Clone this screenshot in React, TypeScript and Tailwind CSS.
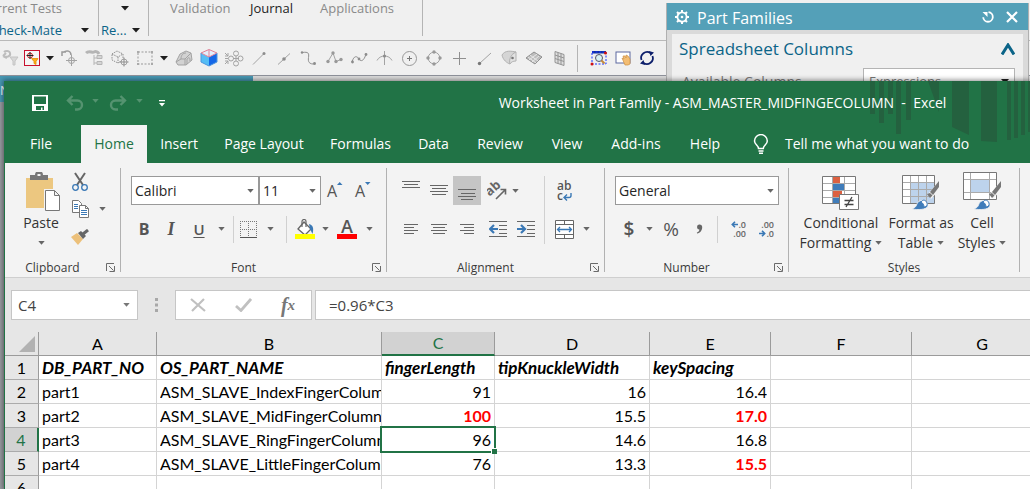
import React from "react";

const UI = "font-['Open_Sans','Noto_Sans',sans-serif]";
const GREY = "#a3a3a3";

function Svg({ w, h, children, className = "" }: { w: number; h: number; children: React.ReactNode; className?: string }) {
  return (
    <svg width={w} height={h} viewBox={`0 0 ${w} ${h}`} fill="none" aria-hidden="true" className={`block shrink-0 ${className}`}>
      {children}
    </svg>
  );
}

function Caret({ color = "#666" }: { color?: string }) {
  return (
    <Svg w={7} h={4}>
      <path d="M0.3 0h6.4L3.5 3.8z" fill={color} />
    </Svg>
  );
}

function BigCaret() {
  return (
    <Svg w={8} h={5}>
      <path d="M0 0h8L4 4.6z" fill="#1e1e1e" />
    </Svg>
  );
}

function Btn({ label, className = "", children }: { label: string; className?: string; children: React.ReactNode }) {
  return (
    <button type="button" aria-label={label} title={label} className={`flex shrink-0 items-center justify-center ${className}`}>
      {children}
    </button>
  );
}

/* ---------- modelling toolbar ---------- */

const snapIcons: { label: string; art: React.ReactNode }[] = [
  {
    label: "Shaded body",
    art: (
      <>
        <path d="M2 14l4-8 6-3 5 2 1 7-6 5-8 0z" fill="#d2d2d2" stroke={GREY} />
        <path d="M2 14l5-3 4 0 0 6M11 11l6-6M7 11c0-4 2-6 5-6M13 16v-5c2-2 3-2 3 2" stroke={GREY} />
      </>
    ),
  },
  {
    label: "Solid body",
    art: (
      <>
        <path d="M2 5l8 4v9l-8-4z" fill="#55bdf5" />
        <path d="M10 9l8-4v9l-8 4z" fill="#1467e8" />
        <path d="M2 5l8-3.500L18 5l-8 4z" fill="#e3eefb" />
        <path d="M2 5l8-3.500L18 5l-8 4zM10 2v7" stroke="#e08095" />
        <path d="M2 5v9l8 4 8-4V5" stroke="#4c96dd" />
      </>
    ),
  },
  {
    label: "Snap points",
    art: (
      <>
        <circle cx="12" cy="5.500" r="2.500" stroke={GREY} />
        <circle cx="12" cy="15.500" r="2.500" stroke={GREY} />
        <circle cx="7" cy="10.500" r="2.500" stroke={GREY} />
        <circle cx="16.500" cy="10.500" r="2.500" stroke={GREY} />
        <path d="M9 10.500h6M12 8v5M1 5l3 3M4 5v3H1M1 16l3-3M1 13h3v3M1 10.500h3" stroke={GREY} />
      </>
    ),
  },
  {
    label: "End point",
    art: (
      <>
        <path d="M4 16.500L14.500 6" stroke={GREY} />
        <circle cx="15" cy="5.500" r="1.500" fill="#8c8c8c" />
      </>
    ),
  },
  {
    label: "Mid point",
    art: (
      <>
        <path d="M4 16.500L16 5.500" stroke={GREY} />
        <circle cx="10" cy="11" r="1.800" fill="#8c8c8c" />
      </>
    ),
  },
  {
    label: "Control point",
    art: (
      <>
        <path d="M3 4.500c7-1 7 1 6.500 5s0 7 7 6.500" stroke="#8f8f8f" />
        <circle cx="3" cy="4.500" r="1.200" fill="#8c8c8c" />
        <circle cx="15.500" cy="15.500" r="1.400" fill="#8c8c8c" />
      </>
    ),
  },
  {
    label: "Spline pole",
    art: (
      <>
        <path d="M4 13.500L9 5l3 8.500 5-2" stroke={GREY} />
        <g fill="#999">
          <circle cx="4" cy="13.500" r="1.700" />
          <circle cx="9" cy="5" r="1.700" />
          <circle cx="12" cy="13.500" r="1.700" />
          <circle cx="17" cy="11.500" r="1.700" />
        </g>
      </>
    ),
  },
  {
    label: "Spline",
    art: (
      <>
        <path d="M3 14c2-7 5-6 7-3s5 2 7-5" stroke="#8f8f8f" />
        <circle cx="3.500" cy="14" r="1.400" fill="#8c8c8c" />
        <circle cx="10" cy="11" r="1.400" fill="#8c8c8c" />
        <circle cx="17" cy="6.500" r="1.400" fill="#8c8c8c" />
      </>
    ),
  },
  {
    label: "Intersection",
    art: (
      <>
        <path d="M10.500 3v14M3 12.500c3-6 12-6 15 0" stroke={GREY} />
        <circle cx="10.500" cy="8" r="1.600" fill="#8c8c8c" />
      </>
    ),
  },
  {
    label: "Arc centre",
    art: (
      <>
        <circle cx="10.500" cy="10.500" r="7" stroke="#999" />
        <path d="M10.500 8v5M8 10.500h5" stroke="#777" />
      </>
    ),
  },
  {
    label: "Quadrant",
    art: (
      <>
        <circle cx="10" cy="10" r="5.800" stroke={GREY} />
        <g fill="#999">
          <circle cx="10" cy="4" r="1.700" />
          <circle cx="10" cy="16" r="1.700" />
          <circle cx="4" cy="10" r="1.700" />
          <circle cx="16" cy="10" r="1.700" />
        </g>
      </>
    ),
  },
  { label: "Existing point", art: <path d="M10.500 4v13M4 10.500h13" stroke="#8f8f8f" /> },
  {
    label: "Point on curve",
    art: (
      <>
        <path d="M5.500 15.500L17 5" stroke={GREY} />
        <circle cx="5.500" cy="15.500" r="1.700" fill="#777" />
      </>
    ),
  },
  {
    label: "Point on face",
    art: (
      <>
        <path d="M3 7c3-5 9-4 14-3-4 1-4 4-3 6-3-1-4 4-3 6-3-1-7-4-8-9z" fill="#d5d5d5" stroke="#b2b2b2" />
        <path d="M11 16c-1-4 0-9 6-12v9c-3 0-5 1-6 3z" fill="#e2e2e2" stroke="#b2b2b2" />
        <circle cx="13.500" cy="10" r="1.300" fill="#777" />
      </>
    ),
  },
  {
    label: "Grid point",
    art: (
      <>
        <path d="M2 10l8-6 8 5-7 7z" fill="#bdbdbd" stroke="#8f8f8f" />
        <path d="M5 12l8-6M8 14l7-6M6 7l8 6M4 9l8 6" stroke="#e8e8e8" />
      </>
    ),
  },
  {
    label: "Bounded grid",
    art: (
      <>
        <path d="M6 3.500l9 3v11l-9-3z" fill="#dedede" stroke="#949494" />
        <path d="M9 4.500v11M12 5.500v11M6 7l9 3M6 10.500l9 3" stroke="#949494" />
      </>
    ),
  },
];

function ModellingToolbar() {
  return (
    <div className="flex h-[35px] shrink-0 items-center overflow-hidden border-b border-[#8f929b]">
      <Btn label="Reset filter" className="w-5">
        <Svg w={18} h={20}>
          <path d="M2 8c4 2 8 0 7-3s-5-2-6-1M2 8l3-3M2 8l4 2" stroke="#bdbdbd" strokeWidth="2" />
          <path d="M9 9h8l-3 4v4h-2v-4z" fill="#d8d8d8" stroke="#c4c4c4" />
        </Svg>
      </Btn>
      <Btn label="Detail filter" className="w-6">
        <Svg w={16} h={16}>
          <rect x="0.500" y="0.500" width="15" height="15" fill="#f6f6f6" stroke="#c8102e" />
          <circle cx="6" cy="5.500" r="2.500" stroke="#c22" />
          <path d="M6 2v7M2.500 5.500h7" stroke="#222" />
          <path d="M7.500 8.500h6.500l-2 3v3l-2-1v-2z" fill="#ffae1a" stroke="#e28b00" strokeWidth="0.800" />
        </Svg>
      </Btn>
      <Btn label="Filter options" className="w-3"><BigCaret /></Btn>
      <Btn label="Point orientation" className="w-[26px]">
        <Svg w={20} h={20}>
          <path d="M4 4.500C8 1.500 12 3 12 7M3 8V4h4" stroke="#999" strokeWidth="1.500" />
          <circle cx="12.500" cy="12.500" r="3" stroke={GREY} />
          <path d="M12.500 7v11M7 12.500h11" stroke={GREY} />
        </Svg>
      </Btn>
      <Btn label="Assembly tree" className="w-[25px]">
        <Svg w={20} h={20}>
          <path d="M1 5c3-3 6 0 8-1s4 0 5 2" stroke="#b5b5b5" strokeWidth="3" />
          <path d="M9 7v10M9 10h4M9 15h4" stroke="#b5b5b5" />
          <path d="M12 7.500h5v3h-5zM12 13.500h5v3h-5z" fill="#d5d5d5" stroke="#b5b5b5" />
        </Svg>
      </Btn>
      <Btn label="Component point" className="w-[25px]">
        <Svg w={20} h={20}>
          <path d="M2 6l5-3 6 3v6l-5 3-6-3zM2 6l6 3 5-3M8 9v6" stroke="#8f8f8f" strokeDasharray="1.500 1" />
          <circle cx="14" cy="14" r="3" fill="#eee" stroke={GREY} />
          <path d="M14 9.500v9M9.500 14h9" stroke="#8f8f8f" />
        </Svg>
      </Btn>
      <Btn label="Rectangle select" className="w-[25px]">
        <Svg w={16} h={14}>
          <rect x="1" y="1" width="14" height="12" stroke="#999" strokeDasharray="2 1.500" />
          <path d="M0 0h2v2H0zM14 0h2v2h-2zM0 12h2v2H0zM14 12h2v2h-2z" fill="#aaa" />
        </Svg>
      </Btn>
      <Btn label="Selection options" className="w-[14px]"><BigCaret /></Btn>
      {snapIcons.map((i) => (
        <Btn key={i.label} label={i.label} className="w-[25px]">
          <Svg w={20} h={20}>{i.art}</Svg>
        </Btn>
      ))}
      <div className="ml-1.5 mr-2 h-[27px] w-px shrink-0 bg-[#b4b4b4]" />
      <Btn label="Zoom to region" className="w-[25px]">
        <Svg w={18} h={18}>
          <rect x="2" y="2" width="14" height="2.500" fill="#1030a0" />
          <rect x="2" y="3" width="14" height="12" stroke="#1733ff" strokeDasharray="2 1.500" />
          <circle cx="9" cy="9" r="3.500" fill="#d8f1f4" stroke="#556" />
          <path d="M11.500 11.500l3 3" stroke="#c48a3a" strokeWidth="2" />
          <circle cx="15.500" cy="4" r="1.500" fill="#d01010" />
          <circle cx="2" cy="15" r="1.500" fill="#d01010" />
        </Svg>
      </Btn>
      <Btn label="Pan" className="w-6">
        <Svg w={18} h={18}>
          <rect x="2" y="3" width="14" height="11" fill="#fff" stroke="#5c68a0" />
          <path d="M8 9l2 1-1-3 2 0 1 2 0-3 2 1 2 3v5l-2 1h-3z" fill="#f3bd73" stroke="#cf8f3f" strokeWidth="0.700" />
        </Svg>
      </Btn>
      <Btn label="Refresh" className="w-6">
        <Svg w={18} h={18}>
          <path d="M3.500 11A6 6 0 0 1 12.500 4M14.500 7A6 6 0 0 1 5.500 14" stroke="#0d1f6b" strokeWidth="1.800" />
          <path d="M11 2l5 1.500-3.500 3.500zM7 16l-5-1.500L5.500 11z" fill="#0d1f6b" />
        </Svg>
      </Btn>
    </div>
  );
}

function HostRibbon() {
  return (
    <div className="flex h-10 shrink-0 overflow-hidden border-b border-transparent text-[13px] leading-[22px] text-[#8a8a8a]">
      <div className="-mt-[3px] w-[98px] shrink-0">
        <div className="flex w-[62px] justify-end overflow-hidden whitespace-nowrap">Current Tests</div>
        <div className="flex items-center text-[#0b6488]">
          <span className="flex w-[62px] justify-end overflow-hidden whitespace-nowrap">Check-Mate</span>
          <Btn label="Check-Mate menu" className="ml-[19px]"><BigCaret /></Btn>
        </div>
      </div>
      <div className="h-9 w-px shrink-0 bg-[#b4b4b4]" />
      <div className="-mt-[3px] w-[49px] shrink-0 pl-0.5">
        <div className="flex h-[22px] items-center pl-5"><Btn label="More tests"><BigCaret /></Btn></div>
        <div className="flex items-center justify-between pr-2 text-[#0b6488]">
          <span>Re...</span>
          <Btn label="Results menu"><BigCaret /></Btn>
        </div>
      </div>
      <div className="h-9 w-px shrink-0 bg-[#b4b4b4]" />
      <div className="-mt-[3px] flex w-[273px] shrink-0 items-start pl-[21px]">
        <span className="w-20">Validation</span>
        <span className="w-[70px] text-[#1e1e1e]">Journal</span>
        <span>Applications</span>
      </div>
      <div className="h-9 w-px shrink-0 bg-[#b4b4b4]" />
    </div>
  );
}

function PartFamilies() {
  return (
    <section className="absolute right-px top-[3px] w-[363px] border-x border-[#b0b0b0] bg-[#dadada]">
      <header className="flex h-[27px] items-center bg-[#54a0b8] pl-2 pr-2.5 text-white">
        <Svg w={14} h={14}>
          <circle cx="7" cy="7" r="4.600" stroke="#fff" strokeWidth="1.800" />
          <circle cx="7" cy="7" r="1.300" fill="#fff" />
          <path d="M7 0v2.500M7 11.500V14M0 7h2.500M11.500 7H14M2 2l1.800 1.800M10.200 10.200L12 12M12 2l-1.800 1.800M3.800 10.200L2 12" stroke="#fff" strokeWidth="2" />
        </Svg>
        <h2 className="flex-1 pl-2 pt-0.5 text-[16px] leading-6">Part Families</h2>
        <Btn label="Reset" className="mr-3">
          <Svg w={12} h={12}>
            <path d="M6.500 1.200a4.800 4.800 0 1 1-5.300 5" stroke="#fff" strokeWidth="1.800" />
            <path d="M0.500 1h5v5z" fill="#fff" />
          </Svg>
        </Btn>
        <Btn label="Close">
          <Svg w={12} h={12}><path d="M1 1l10 10M11 1L1 11" stroke="#fff" strokeWidth="2.200" /></Svg>
        </Btn>
      </header>
      <div className="mx-[5px] mt-1 bg-[#f0f0f0] pb-6 pl-[7px] pr-2">
        <div className="flex h-[30px] items-center justify-between text-[#0b6488]">
          <h3 className="text-[17px] leading-6">Spreadsheet Columns</h3>
          <Btn label="Collapse">
            <Svg w={14} h={12}><path d="M1 11.500L7 2l6 9.500" stroke="#0b6488" strokeWidth="3" /></Svg>
          </Btn>
        </div>
        <div className="flex items-start pl-[3px] pt-1 text-[14px] text-[#777]">
          <label htmlFor="cols" className="flex-1 pt-1 leading-5">Available Columns</label>
          <div className="relative w-[152px]">
            <select id="cols" className="block h-7 w-full appearance-none border border-[#b4b4b4] bg-white pl-[5px] text-[13px] text-[#777]">
              <option>Expressions</option>
            </select>
            <span className="pointer-events-none absolute right-1.5 top-[11px]"><BigCaret /></span>
          </div>
        </div>
      </div>
    </section>
  );
}

/* ---------- Excel window ---------- */

function TitleBar() {
  return (
    <header className="relative flex h-11 shrink-0 items-center pl-[26px] text-white">
      <svg className="absolute right-0 top-0" width="166" height="62" viewBox="0 0 166 62" fill="#24613f" aria-hidden="true">
        <path d="M6 0h5v33H6zM15 0h5v42h-5zM24 0h5v33h-5zM32 0h5v53h-5zM42 0h5v39h-5zM64 0h11v31zM88 0h17v54L88 46zM117 0h16v61l-16-1zM143 0h4v59h-4zM150 0h4v57h-4zM157 0h4v54h-4zM164 0h2v51h-2z" />
      </svg>
      <Btn label="Save" className="w-[18px]">
        <Svg w={16} h={16}>
          <path d="M0 0h16v16H0z" fill="#fff" />
          <path d="M2 1.500h12v7.500H2zM4 11h8v4h-1.500v-2.500H9V15H4z" fill="#217346" />
        </Svg>
      </Btn>
      <Btn label="Undo" className="ml-4 w-5">
        <Svg w={18} h={16}>
          <path d="M6.500 1L2 5.500 6.500 10M2 5.500h9.500a4.500 4.500 0 0 1 0 9H9" stroke="#559370" strokeWidth="2.400" />
        </Svg>
      </Btn>
      <Btn label="Undo list" className="w-5 pb-1"><Caret color="#559370" /></Btn>
      <Btn label="Redo" className="w-[26px]">
        <Svg w={18} h={16}>
          <path d="M11.500 1L16 5.500 11.500 10M16 5.500H6.500a4.500 4.500 0 0 0 0 9H9" stroke="#559370" strokeWidth="2.400" />
        </Svg>
      </Btn>
      <Btn label="Redo list" className="w-4 pb-1"><Caret color="#559370" /></Btn>
      <Btn label="Customize Quick Access Toolbar" className="w-[30px]">
        <Svg w={6} h={7}><path d="M0 0h6v1.200H0zM0 3h6L3 6.400z" fill="#fff" /></Svg>
      </Btn>
      <h1 className="relative flex-1 whitespace-pre pl-[290px] pr-[52px] text-center text-[14px] leading-5">
        {"Worksheet in Part Family - ASM_MASTER_MIDFINGECOLUMN  -  Excel"}
      </h1>
    </header>
  );
}

const tabs = [
  { name: "File", w: "w-[76px]" },
  { name: "Home", w: "w-[66px]" },
  { name: "Insert", w: "w-16" },
  { name: "Page Layout", w: "w-[106px]" },
  { name: "Formulas", w: "w-[87px]" },
  { name: "Data", w: "w-[59px]" },
  { name: "Review", w: "w-[74px]" },
  { name: "View", w: "w-[60px]" },
  { name: "Add-ins", w: "w-[78px]" },
  { name: "Help", w: "w-[60px]" },
];

function Tabs() {
  return (
    <nav className="relative flex h-[38px] shrink-0 text-[14px] leading-5 text-white">
      {tabs.map((t) => (
        <button
          key={t.name}
          type="button"
          className={`${t.w} shrink-0 whitespace-nowrap ${t.name === "Home" ? "bg-[#f3f3f3] text-[#217346]" : ""} ${t.name === "File" ? "pr-1" : ""}`}
        >
          {t.name}
        </button>
      ))}
      <button type="button" className="ml-[18px] flex shrink-0 items-center gap-4 whitespace-nowrap">
        <Svg w={16} h={20}>
          <path d="M5.500 14.500c0-3-4-4-4-7.500a6.300 6.300 0 0 1 12.800 0c0 3.500-4 4.500-4 7.500zM5.500 17h5M6 19.200h4" stroke="#fff" strokeWidth="1.500" />
        </Svg>
        Tell me what you want to do
      </button>
    </nav>
  );
}

function Launcher({ label }: { label: string }) {
  return (
    <button type="button" aria-label={label} title={label} className="absolute bottom-0 right-[5px]">
      <Svg w={9} h={9}>
        <path d="M0.500 8V0.500H8M3 3l4.500 4.500M8.500 3v5.500H3.500" stroke="#6a6a6a" />
      </Svg>
    </button>
  );
}

function Group({ name, width, launcher = true, children }: { name: string; width: string; launcher?: boolean; children: React.ReactNode }) {
  return (
    <section aria-label={name} className={`relative my-[5px] flex shrink-0 flex-col border-r border-[#b1b1b1] ${width}`}>
      <div className="min-h-0 flex-1">{children}</div>
      <div className={`h-[11px] text-center text-[12px] leading-[14px] text-[#3a3a3a] ${launcher ? "pr-5" : ""}`}>{name}</div>
      {launcher && <Launcher label={`${name} settings`} />}
    </section>
  );
}

function Lines({ rows, w = 20, h = 20 }: { rows: [number, number, number][]; w?: number; h?: number }) {
  return (
    <Svg w={w} h={h}>
      {rows.map(([x, y, len]) => (
        <path key={y} d={`M${x} ${y + 0.5}h${len}`} stroke="#666" />
      ))}
    </Svg>
  );
}

function DropField({ id, label, value, className }: { id: string; label: string; value: string; className: string }) {
  return (
    <div className={`relative shrink-0 ${className}`}>
      <select id={id} aria-label={label} className="block h-[29px] w-full appearance-none border border-[#999] bg-white pl-[3px] text-[14px] text-[#262626]">
        <option>{value}</option>
      </select>
      <span className="pointer-events-none absolute right-[5px] top-[13px]"><Caret /></span>
    </div>
  );
}

const Sep = () => <div className="mx-1 h-[27px] w-px shrink-0 bg-[#d0d0d0]" />;

function Clipboard() {
  return (
    <div className="flex pl-[14px]">
      <button type="button" className="flex w-11 flex-col items-center pt-1 text-[14px] leading-5 text-[#333]">
        <Svg w={36} h={40} className="ml-1">
          <path d="M1 6h27v30H1z" fill="#ecc780" />
          <path d="M5 8V3h5a3.500 3.500 0 0 1 8 0h5v5z" fill="#777" />
          <path d="M12.500 4h3V2h-3z" fill="#f3f3f3" />
          <path d="M19 17h11l6 6v17H19z" fill="#f3f3f3" />
          <path d="M20.500 18.500h9l5 5v15h-14zM29.500 18.500v5h5" fill="#fff" stroke="#777" />
        </Svg>
        <span className="mt-px">Paste</span>
        <span className="mt-2"><Caret /></span>
      </button>
      <div className="flex flex-col pl-[5px]">
        <Btn label="Cut" className="h-[27px] w-6">
          <Svg w={18} h={20}>
            <path d="M4 1l8 12M14 1L6 13" stroke="#666" strokeWidth="2" />
            <circle cx="4.500" cy="15.500" r="2.800" stroke="#3a78b5" strokeWidth="1.300" />
            <circle cx="13.500" cy="15.500" r="2.800" stroke="#3a78b5" strokeWidth="1.300" />
          </Svg>
        </Btn>
        <div className="flex">
          <Btn label="Copy" className="h-7 w-6">
            <Svg w={18} h={18}>
              <path d="M1.500 0.500h6l3 3v9h-9z" fill="#fff" stroke="#777" />
              <path d="M3 4.500h4M3 6.500h4M3 8.500h4" stroke="#3a78b5" />
              <path d="M8.500 5.500h6l3 3v9h-9z" fill="#fff" stroke="#777" />
              <path d="M14.500 5.500v3h3" stroke="#777" />
              <path d="M10 10.500h6M10 12.500h6M10 14.500h6" stroke="#3a78b5" />
            </Svg>
          </Btn>
          <Btn label="Copy options" className="w-5"><Caret /></Btn>
        </div>
        <Btn label="Format Painter" className="h-7 w-6">
          <Svg w={18} h={16}>
            <path d="M0 8l6-4 6 6-5 6z" fill="#ecc07a" />
            <path d="M7 4l3-2 5 5-3 3z" fill="#666" />
            <path d="M12 5l5-4" stroke="#666" strokeWidth="3" />
          </Svg>
        </Btn>
      </div>
    </div>
  );
}

function FontGroup() {
  return (
    <div className="pl-[10px] pt-2 text-[#555]">
      <div className="flex">
        <DropField id="font" label="Font" value="Calibri" className="w-32" />
        <DropField id="size" label="Font size" value="11" className="w-[62px]" />
        <Btn label="Increase Font Size" className="w-7 text-[16px] leading-5">
          A<Svg w={6} h={20}><path d="M0 4h5.500L2.700 1z" fill="#3a78b5" /></Svg>
        </Btn>
        <Btn label="Decrease Font Size" className="w-7 text-[16px] leading-5">
          A<Svg w={6} h={20}><path d="M0 1h5.500L2.700 4z" fill="#3a78b5" /></Svg>
        </Btn>
      </div>
      <div className="mt-[10px] flex h-7 items-center">
        <Btn label="Bold" className="w-[26px] text-[16px] font-bold">B</Btn>
        <Btn label="Italic" className="w-7 font-['Liberation_Serif',serif] text-[18px] font-bold italic">I</Btn>
        <Btn label="Underline" className="w-7 text-[15px] font-semibold underline underline-offset-2">U</Btn>
        <Btn label="Underline options" className="w-4"><Caret /></Btn>
        <Sep />
        <Btn label="Borders" className="w-5">
          <Svg w={17} h={17}>
            <path d="M0 0.500h17M0 8.500h17M0.500 0v16M8.500 0v16M16.500 0v16" stroke="#777" strokeDasharray="1 1" />
            <path d="M0 16.500h17" stroke="#555" />
          </Svg>
        </Btn>
        <Btn label="Border options" className="w-6"><Caret /></Btn>
        <Sep />
        <Btn label="Fill Color" className="w-7">
          <Svg w={20} h={20}>
            <path d="M9 3l7 7-6 6-7-6z" fill="#fff" stroke="#666" strokeWidth="1.300" />
            <path d="M7 8V2.500a2 2 0 0 1 4 0V8" stroke="#666" strokeWidth="1.200" />
            <path d="M14 5c4 1 5 4 3.500 10L15 10z" fill="#3a78b5" />
            <path d="M0 15h20v5H0z" fill="#ff0" />
          </Svg>
        </Btn>
        <Btn label="Fill options" className="w-3"><Caret /></Btn>
        <Btn label="Font Color" className="w-8 flex-col text-[18px] font-semibold leading-[15px]">
          A<span className="h-[5px] w-5 bg-[#f00]" />
        </Btn>
        <Btn label="Font color options" className="w-3"><Caret /></Btn>
      </div>
    </div>
  );
}

function AlignmentGroup() {
  return (
    <div className="flex pl-[10px] pt-2 text-[#555]">
      <div>
        <div className="flex h-[29px]">
          <Btn label="Top Align" className="w-7"><Lines rows={[[1, 2, 18], [3, 5, 14], [1, 8, 18]]} h={24} /></Btn>
          <Btn label="Middle Align" className="w-7"><Lines rows={[[1, 6, 18], [3, 9, 14], [1, 12, 18], [3, 15, 14]]} h={24} /></Btn>
          <Btn label="Bottom Align" className="w-7 bg-[#c5c5c5]"><Lines rows={[[1, 10, 18], [4, 14, 14], [1, 17, 18], [4, 20, 12]]} h={24} /></Btn>
          <Btn label="Orientation" className="ml-1 w-6">
            <Svg w={20} h={20}>
              <text x="0" y="13" fontSize="13" fontWeight="700" fontFamily="Open Sans" fill="#666" transform="rotate(-42 5 11)">ab</text>
              <path d="M9 18L18 9M13.500 8.500H18.500V13.500" stroke="#666" strokeWidth="1.600" />
            </Svg>
          </Btn>
          <Btn label="Orientation options" className="w-3"><Caret /></Btn>
        </div>
        <div className="mt-[10px] flex h-7 items-center">
          <Btn label="Align Left" className="w-7"><Lines rows={[[3, 4, 14], [3, 7, 10], [3, 10, 14], [3, 13, 10]]} h={18} /></Btn>
          <Btn label="Center" className="w-7"><Lines rows={[[2, 4, 16], [4, 7, 12], [2, 10, 16], [4, 13, 12]]} h={18} /></Btn>
          <Btn label="Align Right" className="w-7"><Lines rows={[[3, 4, 14], [7, 7, 10], [3, 10, 14], [7, 13, 10]]} h={18} /></Btn>
          <Btn label="Decrease Indent" className="ml-[3px] w-7">
            <Svg w={18} h={17}>
              <path d="M0 0.500h18M10 4.500h8M10 8.500h8M10 12.500h8M0 15.500h18" stroke="#666" />
              <path d="M9 8H1.500M5 4L1 8l4 4" stroke="#3a78b5" strokeWidth="2.200" />
            </Svg>
          </Btn>
          <Btn label="Increase Indent" className="w-7">
            <Svg w={18} h={17}>
              <path d="M0 0.500h18M10 4.500h8M10 8.500h8M10 12.500h8M0 15.500h18" stroke="#666" />
              <path d="M0 8h7.500M4 4l4 4-4 4" stroke="#3a78b5" strokeWidth="2.200" />
            </Svg>
          </Btn>
        </div>
      </div>
      <div className="mx-1 h-[68px] w-px bg-[#d0d0d0]" />
      <div>
        <div className="flex h-[29px]">
          <Btn label="Wrap Text" className="w-8 flex-col items-start pl-2 text-[12px] font-semibold leading-[10px]">
            <span>ab</span>
            <span className="flex items-end">
              c
              <Svg w={9} h={8}><path d="M8 0v2.500a2 2 0 0 1-2 2H1.500M4 1.500L1 4.500l3 3" stroke="#3a78b5" strokeWidth="1.400" /></Svg>
            </span>
          </Btn>
        </div>
        <div className="mt-[10px] flex h-7">
          <Btn label="Merge & Center" className="w-[30px]">
            <Svg w={19} h={19}>
              <path d="M0.500 0.500h18v18H0.500zM0.500 4.500h18M0.500 14.500h18M9.500 0.500v4M9.500 14.500v4" fill="#fff" stroke="#666" />
              <path d="M2.500 9.500h14M5 7L2.500 9.500 5 12M14 7l2.500 2.500L14 12" stroke="#3a78b5" strokeWidth="1.300" />
            </Svg>
          </Btn>
          <Btn label="Merge options" className="w-[14px]"><Caret /></Btn>
        </div>
      </div>
    </div>
  );
}

function DecimalIcon({ arrow }: { arrow: "left" | "right" }) {
  const up = arrow === "left";
  const mark = (
    <Svg w={7} h={7}>
      <path d={up ? "M7 3.500H1.500M4 0.800L1.300 3.500 4 6.200" : "M0 3.500h5.500M3 0.800l2.700 2.700L3 6.200"} stroke="#3a78b5" strokeWidth="1.600" />
    </Svg>
  );
  return (
    <span className="flex w-4 flex-col items-end text-[9px] font-semibold leading-[9px] text-[#666]">
      <span className="flex items-center">{up && mark}{up ? ".0" : ".00"}</span>
      <span className="flex items-center">{!up && mark}{up ? ".00" : ".0"}</span>
    </span>
  );
}

function NumberGroup() {
  return (
    <div className="pl-[10px] pt-2 text-[#555]">
      <DropField id="format" label="Number Format" value="General" className="w-[164px]" />
      <div className="mt-[10px] flex h-7 items-center">
        <Btn label="Accounting" className="w-7 text-[19px] font-semibold">$</Btn>
        <Btn label="Accounting options" className="w-3"><Caret /></Btn>
        <Btn label="Percent Style" className="w-8 text-[19px]">%</Btn>
        <Btn label="Comma Style" className="w-6">
          <Svg w={7} h={10}><path d="M3 0.500a2.600 2.600 0 0 1 3.200 2.700C6.200 6.500 4 9 1.200 9.600L0.800 8.700C2.500 8 3.400 7 3.300 5.600A2.600 2.600 0 0 1 3 0.500z" fill="#666" /></Svg>
        </Btn>
        <div className="mx-1.5 h-[27px] w-px shrink-0 bg-[#d0d0d0]" />
        <Btn label="Increase Decimal" className="w-7"><DecimalIcon arrow="left" /></Btn>
        <Btn label="Decrease Decimal" className="w-7"><DecimalIcon arrow="right" /></Btn>
      </div>
    </div>
  );
}

function Brush() {
  return (
    <g>
      <path d="M38 8L26 22l3 5 9-10z" fill="#f3f3f3" />
      <path d="M37 9v6L31 23l-3-3z" fill="#777" />
      <path d="M25 22l3-1 2.500 2.500L28 26z" fill="#777" />
      <path d="M10 37c5-2 4-4 6-7a6 6 0 0 1 10 4c-2 4-10 4-16 3z" fill="#3f7cba" stroke="#f3f3f3" strokeWidth="0.800" />
      <path d="M19 30c2-3 5-2 6 1s-2 4-3 4c0-2-1-4-3-5z" fill="#fff" stroke="#3f7cba" />
    </g>
  );
}

function StyleButton({ lines, width, children }: { lines: [string, string]; width: string; children: React.ReactNode }) {
  return (
    <button type="button" className={`flex shrink-0 flex-col items-center whitespace-nowrap text-[14px] leading-5 text-[#333] ${width}`}>
      {children}
      <span className="mt-[5px]">{lines[0]}</span>
      <span className="flex items-center gap-1">{lines[1]}<Caret /></span>
    </button>
  );
}

function StylesGroup() {
  return (
    <div className="flex pl-[9px]">
      <StyleButton lines={["Conditional", "Formatting"]} width="w-[86px]">
        <Svg w={38} h={40} className="mt-0.5 -mb-0.5">
          <path d="M0.500 6.500h33v27h-33z" fill="#fff" />
          <path d="M11 6h7v7h-7zM11 20h9v7h-9z" fill="#dc6141" />
          <path d="M11 13h11v7H11zM11 27h6v7h-6z" fill="#3f7cba" />
          <path d="M0.500 13.500h33M0.500 20.500h33M0.500 27.500h33M10.500 6.500v27M22.500 6.500v27" stroke="#aaa" />
          <path d="M0.500 6.500h33v27h-33z" stroke="#777" />
          <path d="M17.500 24.500h19v15h-19z" fill="#fff" stroke="#777" />
          <path d="M22.500 30.500h9M22.500 34.500h9M30 27l-6 10" stroke="#444" strokeWidth="1.300" />
        </Svg>
      </StyleButton>
      <StyleButton lines={["Format as", "Table"]} width="w-[74px]">
        <Svg w={38} h={40} className="mt-0.5 -mb-0.5">
          <path d="M0.500 5.500h32v28h-32z" fill="#fff" />
          <path d="M8 12h25v22H8z" fill="#bdd3ec" />
          <path d="M0.500 12.500h32M0.500 19.500h32M0.500 26.500h32M8.500 5.500v28M16.500 5.500v28M24.500 5.500v28" stroke="#aaa" />
          <path d="M0.500 5.500h32v28h-32z" stroke="#777" />
          <g transform="translate(0 2)"><Brush /></g>
        </Svg>
      </StyleButton>
      <StyleButton lines={["Cell", "Styles"]} width="w-12">
        <Svg w={38} h={40} className="mt-0.5 -mb-0.5">
          <path d="M0.500 2.500h33v27h-33z" fill="#fff" />
          <path d="M8 10h18v12H8z" fill="#bdd3ec" />
          <path d="M0.500 9.500h33M0.500 22.500h33M7.500 2.500v27M26.500 2.500v27" stroke="#aaa" />
          <path d="M0.500 2.500h33v27h-33z" stroke="#777" />
          <g transform="translate(1 2)"><Brush /></g>
        </Svg>
      </StyleButton>
    </div>
  );
}

function Ribbon() {
  return (
    <div className="flex h-[115px] shrink-0 overflow-hidden border-b border-[#cfcfcf] bg-[#f3f3f3]">
      <Group name="Clipboard" width="w-[116px]"><Clipboard /></Group>
      <Group name="Font" width="w-[266px]"><FontGroup /></Group>
      <Group name="Alignment" width="w-[218px]"><AlignmentGroup /></Group>
      <Group name="Number" width="w-[184px]"><NumberGroup /></Group>
      <Group name="Styles" width="w-[231px]" launcher={false}><StylesGroup /></Group>
    </div>
  );
}

function FormulaBar() {
  return (
    <div className="flex shrink-0 bg-[#e6e6e6] py-3 pl-1.5 text-[15px] text-[#444]">
      <div className="relative w-[127px] shrink-0">
        <input aria-label="Name Box" defaultValue="C4" className="block h-[30px] w-full border border-[#c6c6c6] bg-white pl-1.5" />
        <button type="button" aria-label="Name list" className="absolute right-2 top-[13px]"><Caret color="#777" /></button>
      </div>
      <div className="flex w-[37px] shrink-0 items-center justify-center">
        <Svg w={3} h={14}><path d="M0 0h3v3H0zM0 5.500h3v3H0zM0 11h3v3H0z" fill="#a8a8a8" /></Svg>
      </div>
      <div className="flex h-[30px] w-[137px] shrink-0 items-center border border-[#c6c6c6] bg-white">
        <Btn label="Cancel" className="w-11">
          <Svg w={16} h={14}><path d="M1 1l14 12M14 1L2 13" stroke="#c0c0c0" strokeWidth="2.200" /></Svg>
        </Btn>
        <Btn label="Enter" className="w-[46px]">
          <Svg w={17} h={14}><path d="M1 8l5 4.500L16 1" stroke="#c0c0c0" strokeWidth="2.800" /></Svg>
        </Btn>
        <Btn label="Insert Function" className="w-[44px] items-baseline font-['Liberation_Serif',serif] font-bold italic text-[#777]">
          <span className="text-[20px] leading-6">f</span><span className="text-[15px]">x</span>
        </Btn>
      </div>
      <input aria-label="Formula" defaultValue="=0.96*C3" className="ml-[3px] block h-[30px] min-w-0 flex-1 border border-r-0 border-[#c6c6c6] bg-white pl-[13px]" />
    </div>
  );
}

const columns = [
  { name: "A", w: "w-[118px]" },
  { name: "B", w: "w-[225px]" },
  { name: "C", w: "w-[113px]" },
  { name: "D", w: "w-[155px]" },
  { name: "E", w: "w-[121px]" },
  { name: "F", w: "w-[141px]" },
  { name: "G", w: "w-[141px]" },
];

const rows: string[][] = [
  ["DB_PART_NO", "OS_PART_NAME", "fingerLength", "tipKnuckleWidth", "keySpacing", "", ""],
  ["part1", "ASM_SLAVE_IndexFingerColumn", "91", "16", "16.4", "", ""],
  ["part2", "ASM_SLAVE_MidFingerColumn", "100", "15.5", "17.0", "", ""],
  ["part3", "ASM_SLAVE_RingFingerColumn", "96", "14.6", "16.8", "", ""],
  ["part4", "ASM_SLAVE_LittleFingerColumn", "76", "13.3", "15.5", "", ""],
  ["", "", "", "", "", "", ""],
  ["", "", "", "", "", "", ""],
];

const changed = new Set(["2-2", "2-4", "4-4"]);

function Sheet() {
  return (
    <div className="min-h-0 flex-1 overflow-hidden bg-white">
      <table className="w-full table-fixed border-separate border-spacing-0 font-['Lato',sans-serif] text-[16px] leading-[23px] text-black">
        <colgroup>
          <col className="w-[34px]" />
          {columns.map((c) => <col key={c.name} className={c.w} />)}
        </colgroup>
        <thead>
          <tr>
            <th className="h-6 border-b border-r border-[#9b9b9b] bg-[#e6e6e6] p-0">
              <Svg w={16} h={16} className="ml-auto mr-[3px] mt-px"><path d="M16 0v16H0z" fill="#b2b2b2" /></Svg>
            </th>
            {columns.map((c) => (
              <th
                key={c.name}
                scope="col"
                className={`h-6 p-0 font-normal ${c.name === "C" ? "border-b-2 border-r border-b-[#217346] border-r-[#9b9b9b] bg-[#d2d2d2] leading-[22px] text-[#217346]" : "border-b border-r border-[#9b9b9b] bg-[#e6e6e6]"}`}
              >
                {c.name}
              </th>
            ))}
          </tr>
        </thead>
        <tbody>
          {rows.map((cells, r) => (
            <tr key={r}>
              <th
                scope="row"
                className={`h-6 border-b p-0 font-normal ${r === 3 ? "border-r-2 border-b-[#ababab] border-r-[#217346] bg-[#d2d2d2] text-[#217346]" : "border-r border-b-[#ababab] border-r-[#9b9b9b] bg-[#e6e6e6]"}`}
              >
                {r + 1}
              </th>
              {cells.map((v, c) => {
                const tone = r === 0 ? "text-[17px] font-bold italic" : changed.has(`${r}-${c}`) ? "text-right font-bold text-[#f00]" : c > 1 ? "text-right" : "";
                const selected = r === 3 && c === 2;
                return (
                  <td key={c} className={`relative h-6 border-b border-r border-[#d4d4d4] py-0 pl-[3px] ${c === 1 ? "pr-0" : "pr-[3px]"} ${tone}`}>
                    <div className={`h-[23px] whitespace-nowrap leading-6 ${selected ? "" : "overflow-hidden"}`}>{v}</div>
                    {selected && (
                      <span className="pointer-events-none absolute -inset-x-0.5 -bottom-0.5 -top-0.5 z-10 border-2 border-[#217346]">
                        <span className="absolute -bottom-[3px] -right-[3px] size-[6px] border-l border-t border-white bg-[#217346]" />
                      </span>
                    )}
                  </td>
                );
              })}
            </tr>
          ))}
        </tbody>
      </table>
    </div>
  );
}

export default function App() {
  return (
    <div className={`relative flex h-screen w-full flex-col overflow-hidden bg-[#f0f0f0] ${UI}`}>
      <HostRibbon />
      <div className="border-t border-[#b9b9b9]"><ModellingToolbar /></div>
      <div className="flex min-h-0 flex-1 flex-col bg-[#9a9da3]">
        <div className="flex h-[26px] bg-[#dcdcdc]">
          <div className="w-[253px] bg-[#4898b4] pt-1 text-[13px] leading-5 text-white">N</div>
        </div>
      </div>
      <PartFamilies />
      <main className="absolute bottom-0 left-1 right-0 top-[81px] flex flex-col overflow-hidden border-l border-[#217346] bg-[#217346] shadow-[0_0_5px_1px_rgba(0,0,0,0.45)]">
        <TitleBar />
        <Tabs />
        <Ribbon />
        <FormulaBar />
        <Sheet />
      </main>
    </div>
  );
}
